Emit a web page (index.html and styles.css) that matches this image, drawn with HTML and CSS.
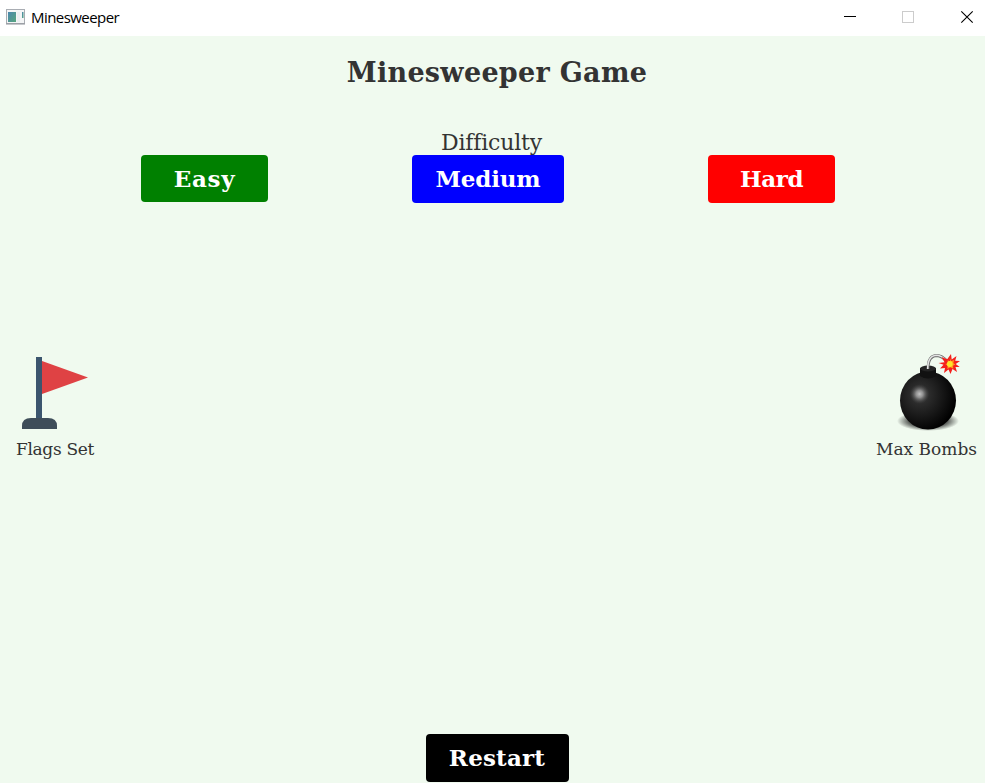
FILE: index.html
```html
<!DOCTYPE html>
<html lang="en">
<head>
<meta charset="utf-8">
<title>Minesweeper</title>
<link rel="stylesheet" href="styles.css">
</head>
<body>
<header class="titlebar">
  <svg class="app-icon" width="19" height="16" viewBox="0 0 19 16">
    <defs><linearGradient id="pane" x1="0" y1="0" x2="1" y2="1"><stop offset="0" stop-color="#4b87ae"/><stop offset="1" stop-color="#57a67e"/></linearGradient></defs>
    <rect x=".5" y=".5" width="18" height="14" fill="#f4f5f6" stroke="#a9adb3"/>
    <path d="M0 15h19" stroke="#8e9299"/>
    <rect x="2" y="3" width="8" height="10" fill="url(#pane)"/>
    <rect x="11" y="3" width="3" height="10" fill="#eceef1"/>
    <rect x="16" y="3" width="1.500" height="6" fill="url(#pane)"/>
  </svg>
  <span class="caption">Minesweeper</span>
  <svg class="controls" width="132" height="16" viewBox="0 0 132 16" fill="none">
    <path d="M0 7.500h12" stroke="#000"/>
    <rect x="58.500" y="2.500" width="11" height="11" stroke="#ccc"/>
    <path d="M117.300 2.300l11.400 11.400M128.700 2.300l-11.400 11.400" stroke="#000" stroke-width="1.100"/>
  </svg>
</header>
<main>
  <h1><span>Minesweeper Game</span></h1>
  <p class="difficulty"><span>Difficulty</span></p>
  <div class="levels">
    <button class="easy"><span>Easy</span></button>
    <button class="medium"><span>Medium</span></button>
    <button class="hard"><span>Hard</span></button>
  </div>
  <div class="board">
    <div class="stat flags">
      <svg width="78" height="80" viewBox="0 0 78 80">
        <path d="M26 8L72 24.500L26 41z" fill="#df4244"/>
        <rect x="20" y="4" width="6" height="62" fill="#3b556e"/>
        <path d="M6 76v-3q0-8 9-8h17q9 0 9 8v3z" fill="#3e4d59"/>
      </svg>
      <span>Flags Set</span>
    </div>
    <div class="stat bombs">
      <svg width="80" height="80" viewBox="0 0 80 80">
        <defs>
          <radialGradient id="ball" cx=".36" cy=".4" r=".65"><stop offset="0" stop-color="#3a3a3a"/><stop offset=".45" stop-color="#202020"/><stop offset="1" stop-color="#000"/></radialGradient>
          <radialGradient id="shine"><stop offset="0" stop-color="#c4c4c4"/><stop offset=".35" stop-color="#a0a0a0" stop-opacity=".85"/><stop offset="1" stop-color="#444" stop-opacity="0"/></radialGradient>
          <radialGradient id="shade"><stop offset="0" stop-color="#000"/><stop offset=".6" stop-color="#000" stop-opacity=".65"/><stop offset="1" stop-color="#000" stop-opacity="0"/></radialGradient>
        </defs>
        <ellipse cx="41" cy="68" rx="31" ry="10" fill="url(#shade)"/>
        <ellipse cx="41" cy="47.500" rx="28" ry="29" fill="url(#ball)"/>
        <circle cx="32.500" cy="41" r="10" fill="url(#shine)"/>
        <path d="M33 15v8q8 5 16 0v-8z" fill="#111"/>
        <ellipse cx="41" cy="15.500" rx="8" ry="3" fill="#242424"/>
        <path d="M41 16C41 6 45 2.500 50 2.500C54 2.700 57 5 60 8" fill="none" stroke="#666" stroke-width="2.800"/>
        <path d="M40.700 16C40.700 6 45 2.200 50 2.200C54 2.500 57 5 60 8" fill="none" stroke="#e4e4e4" stroke-width="1.600"/>
        <path d="M64 1l.7 5.500L69.500 3l-1.300 4.700L73 8l-4.300 3 4 3-4.200-.1L70 19l-4.500-3-2 5-2-4.600L57 20l1-5-5 .500 3.500-3.800L51.500 10l6-.8L54.500 4l5.700 2.300z" fill="#f5201c"/>
        <path d="M62.800 5l1.400 3 3.100-1-1 3 2 1.500-2.300 1.200.3 3-3-1.500-3 1.800.4-3.300-2.400-1.700 2.800-.8-.5-3 2.500 1z" fill="#ff981c"/>
        <circle cx="62.800" cy="11" r="2.900" fill="#ffe32a"/>
      </svg>
      <span>Max Bombs</span>
    </div>
  </div>
  <button class="restart"><span>Restart</span></button>
</main>
</body>
</html>
```
FILE: styles.css
```css
* { box-sizing: border-box; }
body {
  margin: 0;
  height: 783px;
  overflow: hidden;
  display: flex;
  flex-direction: column;
  background: #f0faef;
  color: #333;
  font-family: "DejaVu Serif", serif;
}
.titlebar {
  flex: none;
  height: 36px;
  display: flex;
  align-items: center;
  padding: 0 9px 2px 6px;
  background: #fff;
}
.app-icon { margin-right: 6px; }
.caption { font: 15px/20px "Open Sans", sans-serif; letter-spacing: -.55px; color: #000; padding-bottom: 1px; }
.controls { margin-left: auto; }
main { flex: 1; display: flex; flex-direction: column; align-items: center; }
span { white-space: nowrap; }
h1 {
  margin: 17px 0 0 9px;
  height: 39px;
  font-size: 27px;
  line-height: 40px;
  letter-spacing: .3px;
}
.difficulty {
  margin: 36px 2px 0 0;
  height: 27px;
  font-size: 22px;
  line-height: 30px;
  letter-spacing: -.2px;
}
.levels { width: 100%; display: flex; align-items: flex-start; padding-left: 141px; }
button {
  display: flex;
  justify-content: center;
  align-items: center;
  border: 0;
  padding: 0;
  border-radius: 4px;
  color: #fff;
  font: bold 23px/30px "DejaVu Serif", serif;
}
.easy { width: 127px; height: 47px; background: #008000; letter-spacing: .7px; }
.medium { width: 152px; height: 48px; margin-left: 144px; background: #00f; letter-spacing: -.2px; }
.hard { width: 127px; height: 48px; margin-left: 144px; background: #f00; letter-spacing: -.4px; }
.board { width: 100%; height: 260px; margin-top: 150px; display: flex; justify-content: space-between; }
.stat { display: flex; flex-direction: column; align-items: center; font-size: 17px; line-height: 24px; }
.stat svg { display: block; margin-bottom: 4px; }
.flags { margin-left: 16px; width: 78px; letter-spacing: -.3px; }
.bombs { margin-right: 8px; width: 101px; }
.restart { width: 143px; height: 48px; margin: 121px 0 0 9px; background: #000; letter-spacing: .2px; }
```
